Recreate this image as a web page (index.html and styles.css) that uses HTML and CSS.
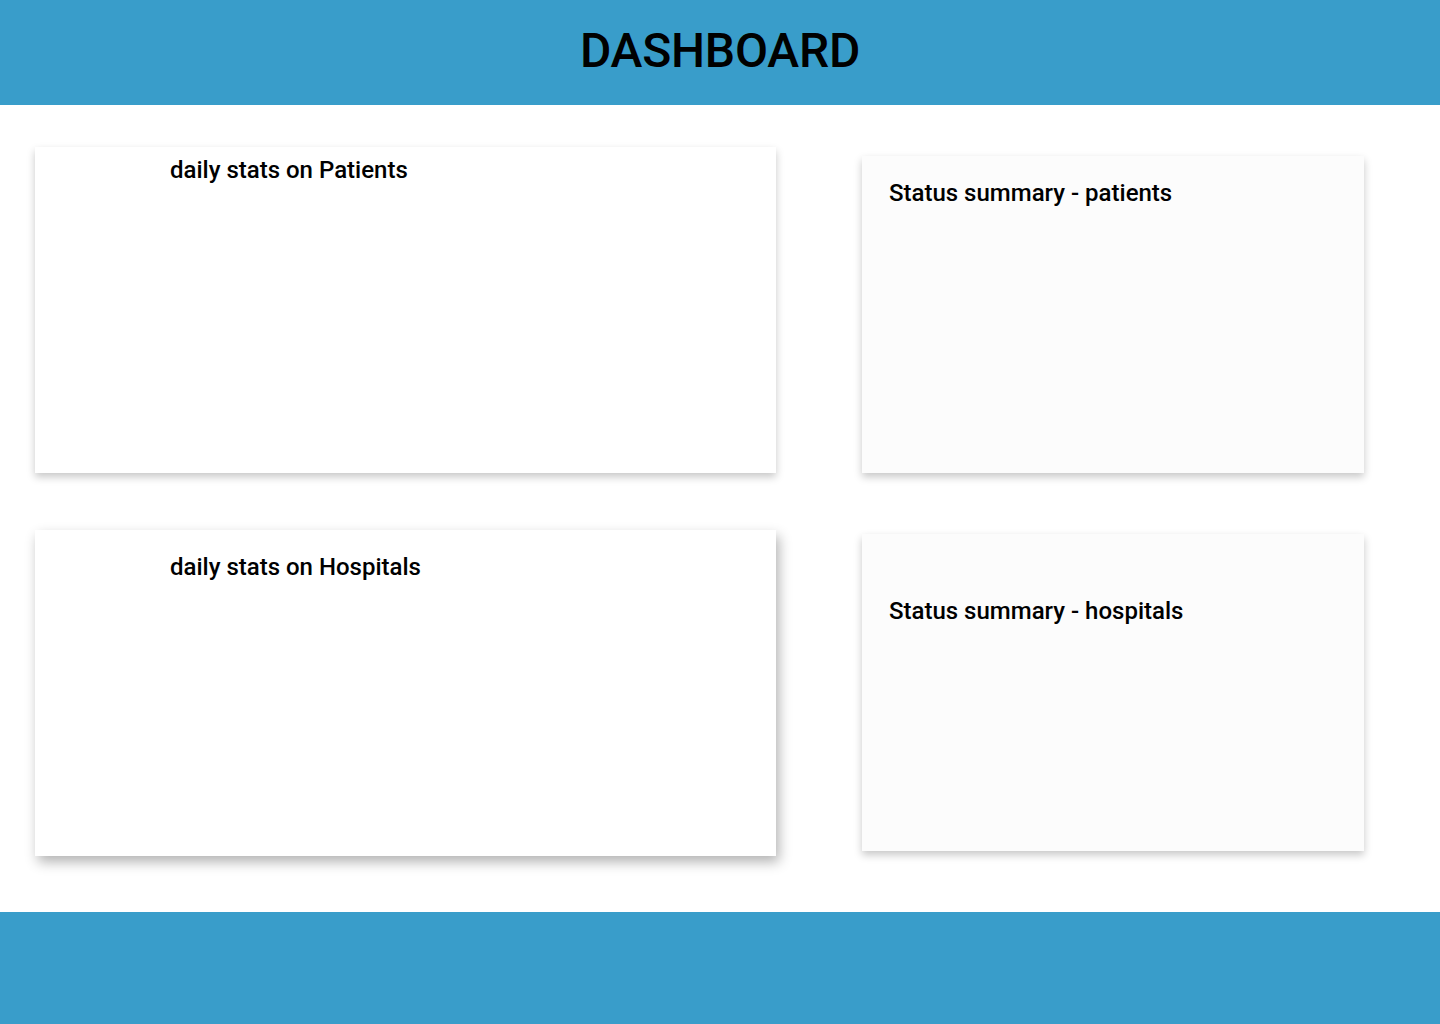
FILE: index.html
```html
<!DOCTYPE html>
<html>
<head>
<meta charset="utf-8">
<title>Dashboard</title>
<link rel="stylesheet" href="styles.css">
</head>
<body>
<header class="topbar"><h1 class="title">DASHBOARD</h1></header>
<main class="board">
  <section class="card card-wide"><h2 class="card-title title-w1">daily stats on Patients</h2></section>
  <section class="card card-narrow card-r1n"><h2 class="card-title title-n1">Status summary - patients</h2></section>
  <section class="card card-wide card-deep"><h2 class="card-title title-w2">daily stats on Hospitals</h2></section>
  <section class="card card-narrow card-r2n"><h2 class="card-title title-n2">Status summary - hospitals</h2></section>
</main>
<footer class="bottombar"></footer>
</body>
</html>
```
FILE: styles.css
```css
* { box-sizing: border-box; }
html, body { margin: 0; padding: 0; background: #ffffff; font-family: Roboto, "Liberation Sans", sans-serif; color: #000; }
.topbar { height: 105px; background: #399dca; display: flex; align-items: center; justify-content: center; }
.title { margin: 0; font-size: 48px; font-weight: 500; line-height: 1; padding-bottom: 4px; letter-spacing: -0.2px; }
.board { height: 807px; padding: 42px 0 0 35px; display: grid; grid-template-columns: 741px 502px; grid-template-rows: 326px 326px; column-gap: 86px; row-gap: 57px; align-items: start; }
.card { box-shadow: 0 4px 8px rgba(0,0,0,0.22); }
.card-deep { box-shadow: 3px 6px 12px rgba(0,0,0,0.3); }
.card-wide { background: #ffffff; height: 326px; }
.card-narrow { background: #fcfcfc; height: 317px; }
.card-r1n { margin-top: 9px; }
.card-r2n { margin-top: 4px; }
.card-title { margin: 0; font-size: 24px; font-weight: 500; line-height: 28px; }
.title-w1 { padding: 9px 0 0 135px; }
.title-w2 { padding: 23px 0 0 135px; }
.title-n1 { padding: 23px 0 0 27px; }
.title-n2 { padding: 63px 0 0 27px; }
.bottombar { height: 112px; background: #399dca; }
```
